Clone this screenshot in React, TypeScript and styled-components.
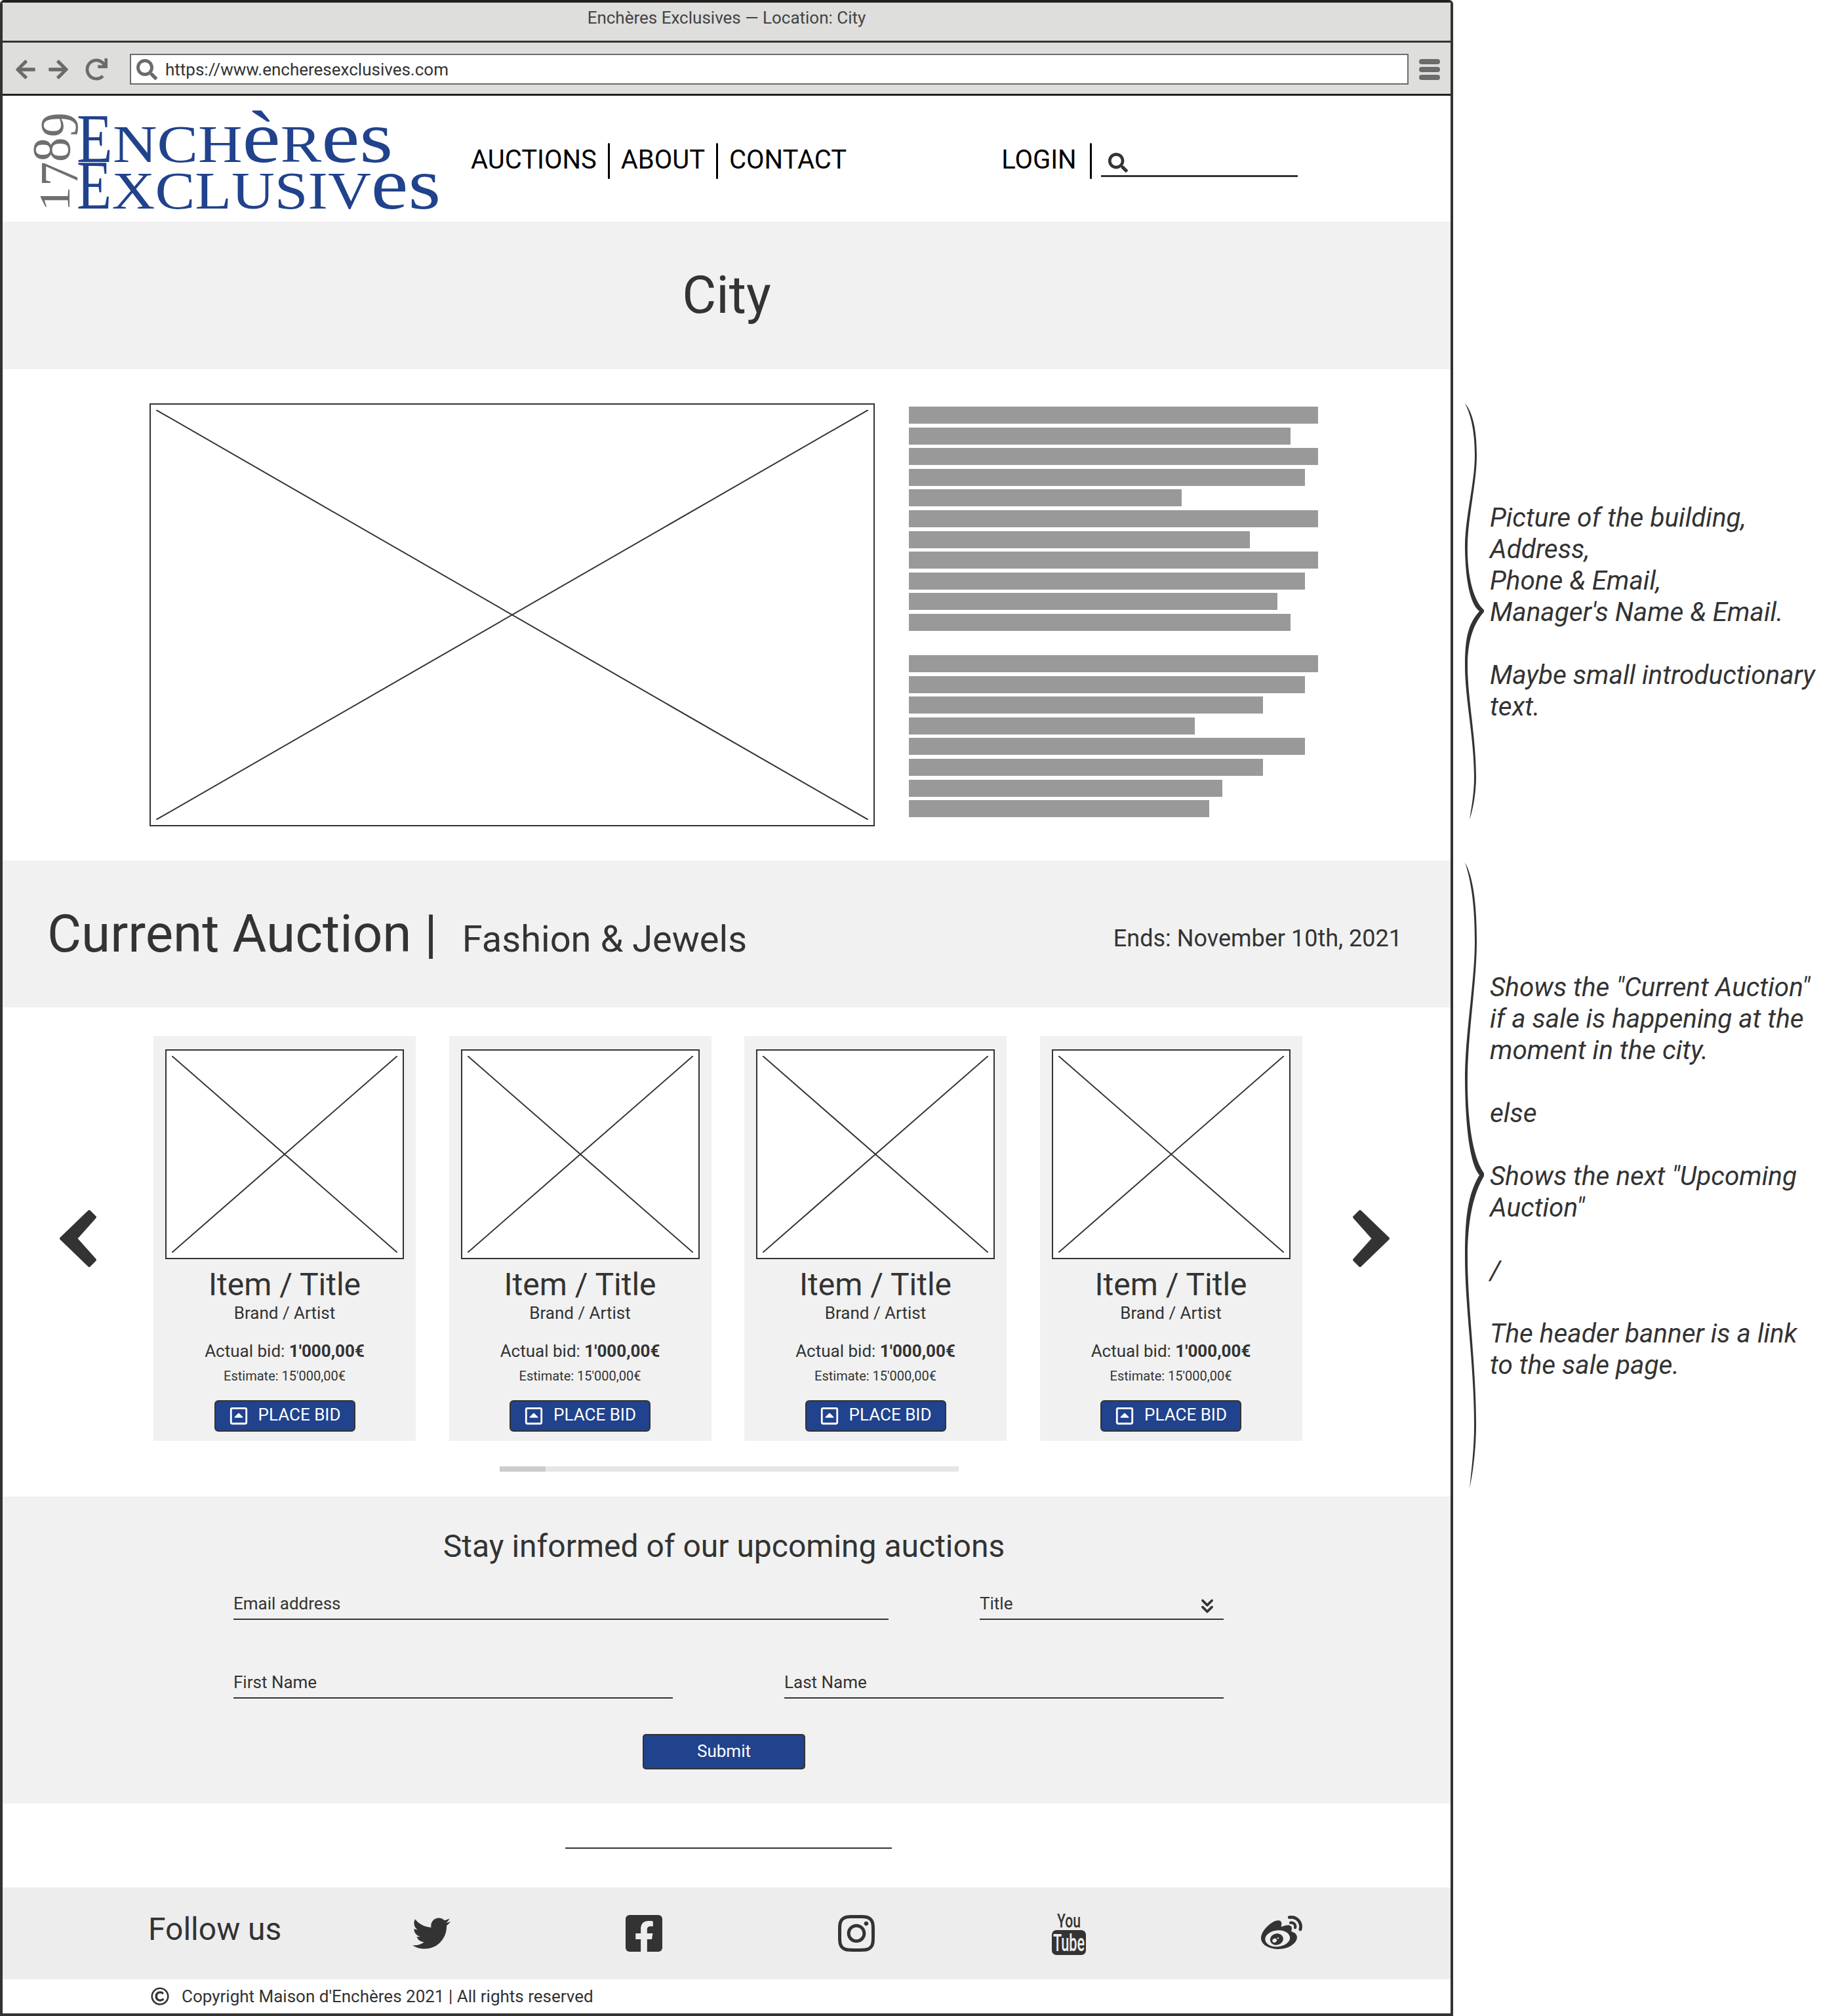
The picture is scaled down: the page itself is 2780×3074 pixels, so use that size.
import styled, { createGlobalStyle } from "styled-components";
import {
  FaArrowLeft,
  FaArrowRight,
  FaRedo,
  FaSearch,
  FaRegCaretSquareUp,
  FaRegCopyright,
  FaTwitter,
  FaFacebookSquare,
  FaInstagram,
  FaWeibo,
} from "react-icons/fa";
import { FiChevronsDown } from "react-icons/fi";

const GlobalStyle = createGlobalStyle`
  * { box-sizing: border-box; }
  body {
    margin: 0;
    background: #fff;
    font-family: Roboto, "Liberation Sans", sans-serif;
    color: #333;
  }
`;

const Page = styled.div`
  display: flex;
  width: 2780px;
  height: 3074px;
  overflow: hidden;
`;

const Window = styled.div`
  width: 2216px;
  height: 3074px;
  flex-shrink: 0;
  border: 4px solid #333;
  border-top-color: #231f20;
  border-radius: 6px 6px 0 0;
  display: flex;
  flex-direction: column;
`;

const TitleBar = styled.div`
  height: 61px;
  background: #dededc;
  border-bottom: 3px solid #333;
  text-align: center;
  font-size: 26px;
  line-height: 46px;
  color: #444;
`;

const Toolbar = styled.div`
  height: 81px;
  background: #dededc;
  border-bottom: 3px solid #231f20;
  display: flex;
  align-items: center;
  padding: 3px 16px 0 18px;
  color: #6b6b6b;
`;

const NavIcon = styled.span<{ $gap: number }>`
  display: flex;
  font-size: 34px;
  margin-right: ${(p) => p.$gap}px;
`;

const AddressBar = styled.div`
  width: 1950px;
  height: 47px;
  background: #fff;
  border: 2px solid #6b6b6b;
  display: flex;
  align-items: center;
  padding-left: 8px;
  margin-right: 16px;
  font-size: 26px;
  color: #333;
  svg {
    color: #6b6b6b;
    font-size: 32px;
    margin-right: 12px;
  }
`;

const Menu = styled.span`
  display: flex;
  flex-direction: column;
  gap: 4px;
`;

const MenuBar = styled.span`
  width: 32px;
  height: 8px;
  border-radius: 4px;
  background: #6b6b6b;
`;

const Header = styled.header`
  height: 192px;
  padding-left: 46px;
  display: flex;
  align-items: flex-start;
`;

const Logo = styled.div`
  width: 622px;
  padding-top: 28px;
  display: flex;
  font-family: "Liberation Serif", serif;
`;

const Year = styled.div`
  width: 67px;
  height: 148px;
  writing-mode: vertical-rl;
  transform: rotate(180deg);
  font-size: 75px;
  line-height: 67px;
  color: #6f6f6f;
  white-space: nowrap;
`;

// old style figures: the reference digits sit at different heights
const YearDigit = styled.span<{ $shift: number; $scale: number }>`
  display: inline-block;
  transform: translateX(${(p) => -p.$shift}px) scaleX(${(p) => p.$scale});
`;

const Wordmark = styled.div`
  color: #21428c;
`;

const WordLine = styled.div<{ $stretch: number }>`
  height: 71px;
  line-height: 71px;
  white-space: nowrap;
  font-size: 106px;
  transform-origin: left center;
  transform: scaleX(${(p) => p.$stretch});
`;

const BigCap = styled.span`
  display: inline-block;
  width: 47px;
  transform-origin: left center;
  transform: scaleX(0.72);
`;

const SmallCap = styled.span`
  font-size: 80px;
  text-transform: uppercase;
`;

const LowerCase = styled.span`
  font-size: 112px;
`;

const Nav = styled.nav`
  display: flex;
  align-items: flex-start;
  margin-top: 72px;
  margin-left: 46px;
  color: #000;
  font-size: 40px;
  line-height: 52px;
`;

const NavLink = styled.span``;

const NavSep = styled.span`
  width: 3px;
  height: 55px;
  background: #000;
  margin: 0 17px;
  border-radius: 2px;
`;

const LoginLink = styled.span`
  margin: 0 3px 0 236px;
`;

const SearchBox = styled.div`
  width: 300px;
  height: 52px;
  margin-left: -3px;
  padding: 15px 0 0 11px;
  border-bottom: 3px solid #333;
  color: #333;
  font-size: 30px;
  line-height: 30px;
  svg {
    display: block;
  }
`;

const CityBand = styled.div`
  height: 225px;
  padding-bottom: 2px;
  background: #f1f1f1;
  display: flex;
  align-items: center;
  justify-content: center;
  font-size: 80px;
  color: #333;
`;

const Intro = styled.section`
  height: 749px;
  padding: 52px 0 0 224px;
  display: flex;
  gap: 52px;
`;

const Placeholder = styled.div<{ $w: number; $h: number; $inset: number }>`
  width: ${(p) => p.$w}px;
  height: ${(p) => p.$h}px;
  flex-shrink: 0;
  background: #fff;
  border: 2px solid #333;
  padding: ${(p) => p.$inset}px;
  svg {
    display: block;
    width: 100%;
    height: 100%;
  }
`;

const TextBlocks = styled.div`
  padding-top: 5px;
  display: flex;
  flex-direction: column;
  gap: 37px;
`;

const TextBlock = styled.div`
  display: flex;
  flex-direction: column;
  gap: 5.6px;
`;

const TextBar = styled.div<{ $w: number }>`
  width: ${(p) => p.$w}px;
  height: 26px;
  background: #999;
`;

const AuctionHead = styled.div`
  height: 224px;
  background: #f1f1f1;
  padding: 0 74px 0 68px;
  display: flex;
  align-items: baseline;
  line-height: 224px;
`;

const AuctionTitle = styled.span`
  font-size: 80px;
`;

const AuctionTheme = styled.span`
  font-size: 56px;
  margin-left: 38px;
`;

const AuctionEnds = styled.span`
  align-self: center;
  margin: 14px 0 0 auto;
  font-size: 36px;
  line-height: 40px;
`;

const Carousel = styled.section`
  height: 746px;
  padding-top: 44px;
`;

const CarouselRow = styled.div`
  display: flex;
  align-items: center;
`;

const ArrowSlot = styled.span<{ $left: number; $right: number }>`
  display: flex;
  margin-left: ${(p) => p.$left}px;
  margin-right: ${(p) => p.$right}px;
`;

const ArrowShape = styled.svg`
  width: 60px;
  height: 91px;
  fill: #333;
  stroke: #333;
  stroke-width: 4;
  stroke-linejoin: round;
`;

const Cards = styled.div`
  display: flex;
  gap: 50.5px;
`;

const Card = styled.article`
  width: 400px;
  height: 617px;
  background: #f1f1f1;
  padding-top: 20px;
  display: flex;
  flex-direction: column;
  align-items: center;
`;

const ItemTitle = styled.div`
  margin-top: 12px;
  font-size: 48px;
  line-height: 54px;
`;

const ItemBrand = styled.div`
  margin-top: 1px;
  font-size: 26px;
  line-height: 30px;
`;

const ItemBid = styled.div`
  margin-top: 27px;
  font-size: 26px;
  line-height: 32px;
  b {
    font-weight: 700;
  }
`;

const ItemEstimate = styled.div`
  margin-top: 9px;
  font-size: 20px;
  line-height: 26px;
`;

const BidButton = styled.button`
  margin-top: 24px;
  width: 215px;
  height: 48px;
  background: #21428c;
  border: 2px solid #333;
  border-radius: 6px;
  color: #fff;
  font-family: inherit;
  font-size: 26px;
  display: flex;
  align-items: center;
  justify-content: center;
  gap: 15px;
  padding: 0 0 5px;
  svg {
    font-size: 30px;
    margin-top: 5px;
  }
`;

const ScrollTrack = styled.div`
  width: 700px;
  height: 8px;
  margin: 39px 0 0 758px;
  background: #e6e6e6;
`;

const ScrollThumb = styled.div`
  width: 70px;
  height: 100%;
  background: #ccc;
`;

const Newsletter = styled.section`
  height: 468px;
  background: #f1f1f1;
  padding-top: 46px;
  display: flex;
  flex-direction: column;
`;

const NewsHeading = styled.div`
  font-size: 48px;
  line-height: 60px;
  text-align: center;
  padding-right: 8px;
  margin-bottom: 37px;
`;

const FormRow = styled.div<{ $gap: number }>`
  display: flex;
  gap: ${(p) => p.$gap}px;
  width: 1510px;
  margin: 0 0 75px 352px;
`;

const Field = styled.div<{ $w: number }>`
  width: ${(p) => p.$w}px;
  height: 45px;
  border-bottom: 2px solid #333;
  font-size: 26px;
  line-height: 40px;
  display: flex;
  justify-content: space-between;
  align-items: flex-start;
  svg {
    font-size: 34px;
    margin: 7px 8px 0 0;
    stroke-width: 2.6;
  }
`;

const SubmitButton = styled.button`
  align-self: center;
  margin: -21px 8px 0 0;
  width: 248px;
  height: 54px;
  padding: 0 0 3px;
  background: #21428c;
  border: 2px solid #333;
  border-radius: 5px;
  color: #fff;
  font-family: inherit;
  font-size: 26px;
`;

const DividerSection = styled.div`
  height: 128px;
  padding: 67px 0 0 858px;
`;

const Divider = styled.div`
  width: 498px;
  height: 2px;
  background: #333;
`;

const Footer = styled.footer`
  height: 140px;
  background: #ededed;
  padding-left: 222px;
  display: flex;
  align-items: center;
`;

const FollowUs = styled.div`
  width: 270px;
  font-size: 48px;
  margin-top: -14px;
`;

const SocialCell = styled.div<{ $size: number }>`
  width: 324px;
  display: flex;
  justify-content: center;
  font-size: ${(p) => p.$size}px;
  color: #333;
`;

const Copyright = styled.div`
  flex: 1;
  padding-left: 226px;
  display: flex;
  align-items: center;
  gap: 19px;
  font-size: 26px;
  svg {
    font-size: 28px;
  }
`;

const Notes = styled.aside`
  padding: 615px 0 0 18px;
  display: flex;
  flex-direction: column;
  gap: 65px;
`;

const NoteBlock = styled.div<{ $h: number }>`
  height: ${(p) => p.$h}px;
  display: flex;
  align-items: center;
  gap: 6px;
`;

const Brace = styled.svg`
  width: 32px;
  height: 100%;
  flex-shrink: 0;
  fill: #333;
`;

const NoteText = styled.div`
  padding-top: 1px;
  font-style: italic;
  font-size: 40.5px;
  line-height: 48px;
  white-space: pre;
  color: #333;
`;

const bars = [
  [624, 582, 624, 604, 416, 624, 520, 624, 604, 562, 582],
  [624, 604, 540, 436, 604, 540, 478, 458],
];

const noteOne = `Picture of the building,
Address,
Phone & Email,
Manager's Name & Email.

Maybe small introductionary
text.`;

const noteTwo = `Shows the "Current Auction"
if a sale is happening at the
moment in the city.

else

Shows the next "Upcoming
Auction"

/

The header banner is a link
to the sale page.`;

const BRACE_PATH =
  "M0 0C12 14 18 40 18 80C18 120 5 170 4 215C3 260 12 300 29 315L29 318C14 335 4 360 4 400C4 450 17 510 17 570C17 595 12 620 7 635C10 615 14 595 14 570C14 510 0 450 0 400C0 355 6 335 22 317C6 305 0 260 0 215C1 170 15 120 15 80C15 45 10 20 0 0Z";

function CrossLines({ width }: { width: number }) {
  return (
    <svg viewBox="0 0 100 100" preserveAspectRatio="none">
      <line x1="0" y1="0" x2="100" y2="100" stroke="#333" strokeWidth={width} vectorEffect="non-scaling-stroke" />
      <line x1="100" y1="0" x2="0" y2="100" stroke="#333" strokeWidth={width} vectorEffect="non-scaling-stroke" />
    </svg>
  );
}

function YoutubeIcon() {
  return (
    <svg width="54" height="66" viewBox="0 0 54 66" overflow="visible">
      <text x="27" y="24" textAnchor="middle" fontFamily="Roboto, sans-serif" fontSize="30" fontWeight="500" fill="#333" textLength="36" lengthAdjust="spacingAndGlyphs">
        You
      </text>
      <rect x="1" y="28" width="52" height="38" rx="7" fill="#333" />
      <text x="27" y="60" textAnchor="middle" fontFamily="Roboto, sans-serif" fontSize="36" fontWeight="500" fill="#ededed" textLength="48" lengthAdjust="spacingAndGlyphs">
        Tube
      </text>
    </svg>
  );
}

function ItemCard() {
  return (
    <Card>
      <Placeholder $w={364} $h={320} $inset={8}>
        <CrossLines width={2} />
      </Placeholder>
      <ItemTitle>Item / Title</ItemTitle>
      <ItemBrand>Brand / Artist</ItemBrand>
      <ItemBid>
        Actual bid: <b>1'000,00€</b>
      </ItemBid>
      <ItemEstimate>Estimate: 15'000,00€</ItemEstimate>
      <BidButton>
        <FaRegCaretSquareUp />
        PLACE BID
      </BidButton>
    </Card>
  );
}

export default function App() {
  return (
    <Page>
      <GlobalStyle />
      <Window>
        <TitleBar>Enchères Exclusives — Location: City</TitleBar>
        <Toolbar>
          <NavIcon $gap={16}>
            <FaArrowLeft />
          </NavIcon>
          <NavIcon $gap={24}>
            <FaArrowRight />
          </NavIcon>
          <NavIcon $gap={34}>
            <FaRedo />
          </NavIcon>
          <AddressBar>
            <FaSearch />
            https://www.encheresexclusives.com
          </AddressBar>
          <Menu>
            <MenuBar />
            <MenuBar />
            <MenuBar />
          </Menu>
        </Toolbar>

        <Header>
          <Logo>
            <Year>
              <YearDigit $shift={0} $scale={0.9}>1</YearDigit>
              <YearDigit $shift={6.5} $scale={1.1}>7</YearDigit>
              <YearDigit $shift={-6} $scale={1.1}>8</YearDigit>
              <YearDigit $shift={6.5} $scale={1.1}>9</YearDigit>
            </Year>
            <Wordmark>
              <WordLine $stretch={1.17}>
                <BigCap>E</BigCap>
                <SmallCap>nch</SmallCap>
                <LowerCase>è</LowerCase>
                <SmallCap>r</SmallCap>
                <LowerCase>es</LowerCase>
              </WordLine>
              <WordLine $stretch={1.14}>
                <BigCap>E</BigCap>
                <SmallCap>xclusiv</SmallCap>
                <LowerCase>es</LowerCase>
              </WordLine>
            </Wordmark>
          </Logo>
          <Nav>
            <NavLink>AUCTIONS</NavLink>
            <NavSep />
            <NavLink>ABOUT</NavLink>
            <NavSep />
            <NavLink>CONTACT</NavLink>
            <LoginLink>LOGIN</LoginLink>
            <NavSep />
            <SearchBox>
              <FaSearch />
            </SearchBox>
          </Nav>
        </Header>

        <CityBand>City</CityBand>

        <Intro>
          <Placeholder $w={1106} $h={645} $inset={8}>
            <CrossLines width={2} />
          </Placeholder>
          <TextBlocks>
            {bars.map((block, i) => (
              <TextBlock key={i}>
                {block.map((w, j) => (
                  <TextBar key={j} $w={w} />
                ))}
              </TextBlock>
            ))}
          </TextBlocks>
        </Intro>

        <AuctionHead>
          <AuctionTitle>Current Auction |</AuctionTitle>
          <AuctionTheme>Fashion &amp; Jewels</AuctionTheme>
          <AuctionEnds>Ends: November 10th, 2021</AuctionEnds>
        </AuctionHead>

        <Carousel>
          <CarouselRow>
            <ArrowSlot $left={85} $right={85}>
              <ArrowShape viewBox="-2 -2 60 91">
                <polygon points="45,2 54,11 25,43.5 54,76 45,85 2,43.5" />
              </ArrowShape>
            </ArrowSlot>
            <Cards>
              <ItemCard />
              <ItemCard />
              <ItemCard />
              <ItemCard />
            </Cards>
            <ArrowSlot $left={75} $right={0}>
              <ArrowShape viewBox="-2 -2 60 91">
                <polygon points="11,2 2,11 31,43.5 2,76 11,85 54,43.5" />
              </ArrowShape>
            </ArrowSlot>
          </CarouselRow>
          <ScrollTrack>
            <ScrollThumb />
          </ScrollTrack>
        </Carousel>

        <Newsletter>
          <NewsHeading>Stay informed of our upcoming auctions</NewsHeading>
          <FormRow $gap={139}>
            <Field $w={999}>Email address</Field>
            <Field $w={372}>
              Title
              <FiChevronsDown />
            </Field>
          </FormRow>
          <FormRow $gap={170}>
            <Field $w={670}>First Name</Field>
            <Field $w={670}>Last Name</Field>
          </FormRow>
          <SubmitButton>Submit</SubmitButton>
        </Newsletter>

        <DividerSection>
          <Divider />
        </DividerSection>

        <Footer>
          <FollowUs>Follow us</FollowUs>
          <SocialCell $size={58}>
            <FaTwitter />
          </SocialCell>
          <SocialCell $size={64}>
            <FaFacebookSquare />
          </SocialCell>
          <SocialCell $size={64}>
            <FaInstagram />
          </SocialCell>
          <SocialCell $size={58}>
            <YoutubeIcon />
          </SocialCell>
          <SocialCell $size={63}>
            <FaWeibo />
          </SocialCell>
        </Footer>

        <Copyright>
          <FaRegCopyright />
          Copyright Maison d'Enchères 2021 | All rights reserved
        </Copyright>
      </Window>

      <Notes>
        <NoteBlock $h={635}>
          <Brace viewBox="0 0 32 635" preserveAspectRatio="none">
            <path d={BRACE_PATH} />
          </Brace>
          <NoteText>{noteOne}</NoteText>
        </NoteBlock>
        <NoteBlock $h={955}>
          <Brace viewBox="0 0 32 635" preserveAspectRatio="none">
            <path d={BRACE_PATH} />
          </Brace>
          <NoteText>{noteTwo}</NoteText>
        </NoteBlock>
      </Notes>
    </Page>
  );
}
